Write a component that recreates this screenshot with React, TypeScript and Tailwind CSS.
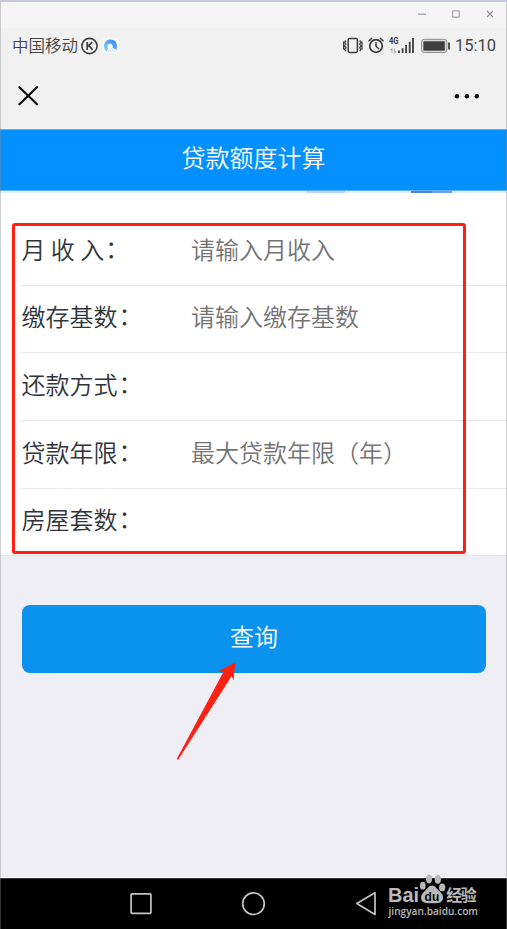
import React from 'react';

const rows = [
  { label: '月 收 入', hint: '请输入月收入', box: 'h-[67px]', line: 'border-[#e6e6e6]' },
  { label: '缴存基数', hint: '请输入缴存基数', box: 'h-[67px]', line: 'border-[#ebebeb]' },
  { label: '还款方式', hint: '', box: 'h-[68px]', line: 'border-[#e6e6e6]' },
  { label: '贷款年限', hint: '最大贷款年限（年）', box: 'h-[68px]', line: 'border-[#ebebeb]' },
  { label: '房屋套数', hint: '', box: 'h-[67px]', line: 'border-transparent' },
];

function WindowBar() {
  return (
    <div className="flex h-7 shrink-0 justify-end border-t-2 border-[#c6c8df] bg-[#f5f5f5]">
      <svg width="107" height="26" viewBox="400 2 107 26" fill="none" stroke="#a3a3a3">
        <path d="M418 14.2h8" strokeWidth="1.3" />
        <rect x="452.6" y="10.8" width="6.6" height="6.4" rx="0.6" strokeWidth="1.2" />
        <path d="M487 11l6 6M493 11l-6 6" stroke="#8c8c8c" strokeWidth="1.1" />
      </svg>
    </div>
  );
}

function StatusBar() {
  return (
    <div className="flex h-[35px] shrink-0 items-center pl-3 pr-[11px] text-[16.5px] text-[#454545]">
      <span className="font-[350] leading-none">中国移动</span>
      <svg className="ml-[2px]" width="42" height="24" viewBox="80 33.5 42 24" fill="none">
        <circle cx="89.5" cy="45.5" r="7.6" stroke="#3f3f3f" strokeWidth="1.6" />
        <path d="M87.2 41.6v7.8M92.3 41.6l-4.6 4.3M88.8 45l3.8 4.4" stroke="#3f3f3f" strokeWidth="1.7" />
        <rect x="102.5" y="37.5" width="16" height="15" rx="3" fill="#f8fafc" />
        <defs>
          <linearGradient id="ring" x1="104" y1="50" x2="116" y2="40" gradientUnits="userSpaceOnUse">
            <stop stopColor="#8ad2f8" />
            <stop offset="1" stopColor="#2f8df5" />
          </linearGradient>
        </defs>
        <path d="M110.5 39c3.8 0 6.5 2.8 6.4 6.4l-.3 4.1-4-2.2c.3-2.6-.6-4-2.4-4-2.6 0-3.4 2.3-2.2 4.4l-1 3.4c-2.1-1.1-3.3-3.2-3.1-5.8.2-3.6 3-6.3 6.6-6.3z" fill="url(#ring)" />
        <path d="M107.5 51.5c-.4-2 .8-3 2.3-2.8.7-1.4 2.6-1.5 3.5-.2 1.5-.1 2.8 1 2.9 3z" fill="#e2edf7" />
      </svg>
      <svg className="ml-auto" width="110" height="24" viewBox="341 33.5 110 24" fill="none">
        <g stroke="#3b3b3b" strokeWidth="1.5">
          <rect x="348.2" y="37.9" width="9.2" height="14" rx="1.4" />
          <path d="M346 40l-1.5 1.8 1.5 1.8-1.5 1.8 1.5 1.8-1.5 1.8 1.5 1.5M343.6 41v8M359.6 40l1.5 1.8-1.5 1.8 1.5 1.8-1.5 1.8 1.5 1.8-1.5 1.5M362 41v8" strokeWidth="1.2" />
          <circle cx="376" cy="45.5" r="6.3" strokeWidth="1.7" />
          <path d="M376 41.7v4l3 2.8M368.5 40.7l3.6-3.2M383.5 40.7l-3.6-3.2" />
        </g>
        <text x="389" y="43.8" fontSize="9" fontWeight="700" fill="#3b3b3b" className="font-['Roboto']" textLength="9.5" lengthAdjust="spacingAndGlyphs">4G</text>
        <path d="M392 52.5V48l-1.6 1.6M394.6 48v4.5l1.8-1.8" stroke="#b0b0b0" strokeWidth="1.1" />
        <path d="M398.9 50v2.5M402.6 47.8v4.7M406.1 44.6v7.9M409.7 41.2v11.3M413 37.6v14.9" stroke="#3b3b3b" strokeWidth="1.8" />
        <rect x="421.6" y="38.8" width="25.2" height="13.2" rx="2.6" stroke="#888888" strokeWidth="1" />
        <rect x="422.6" y="39.8" width="23.2" height="11.2" rx="1.5" fill="#d0d0d0" />
        <rect x="423.4" y="40.8" width="21.4" height="9.4" fill="#3f3f3f" />
        <path d="M449 42v7" stroke="#3f3f3f" strokeWidth="1.8" />
      </svg>
      <span className="ml-1 translate-y-px font-['Roboto',sans-serif] text-[16.5px] leading-none">15:10</span>
    </div>
  );
}

function Watermark() {
  return (
    <div className="absolute left-[384px] top-[872px] h-[54px] w-[100px]">
      <svg width="100" height="54" viewBox="384 872 100 54">
        <g fill="#b9b9bb">
          <ellipse cx="422.8" cy="885.7" rx="2.9" ry="3.9" />
          <ellipse cx="429" cy="879" rx="3" ry="4.4" />
          <ellipse cx="437.8" cy="879.4" rx="3.1" ry="4.4" />
          <ellipse cx="442.2" cy="887.4" rx="3.1" ry="3.9" />
          <path d="M432 885.4c3.2 0 4.6 3 7 5.4 2.6 2.4 4.5 4.5 4 7.7-.5 3.9-3.9 5-11 4.7-6.9.3-10.5-.8-10.9-4.7-.3-3.3 1.4-5.3 3.9-7.7 2.4-2.4 3.8-5.4 7-5.4z" />
          <text x="388" y="902.3" fontSize="21" fontWeight="700" textLength="31" lengthAdjust="spacingAndGlyphs" className="font-['Liberation_Sans',sans-serif]">Bai</text>
          <text x="446.3" y="901.3" fontSize="16" fontWeight="700" textLength="30.5" className="font-['Noto_Sans_CJK_SC',sans-serif]">经验</text>
          <text x="388.5" y="914.5" fontSize="10.5" fontWeight="600" textLength="89.5" lengthAdjust="spacingAndGlyphs" className="font-['Open_Sans',sans-serif]">jingyan.baidu.com</text>
        </g>
        <text x="424.6" y="900.8" fontSize="13" fontWeight="700" fill="#050505" textLength="14.6" lengthAdjust="spacingAndGlyphs" className="font-['Liberation_Sans',sans-serif]">du</text>
      </svg>
    </div>
  );
}

export default function App() {
  return (
    <div
      lang="zh-CN"
      className="relative flex h-[929px] w-[507px] flex-col overflow-hidden bg-[#f1f1f1] font-['Noto_Sans_CJK_SC',sans-serif]"
    >
      <WindowBar />
      <StatusBar />
      <header className="flex h-[66px] shrink-0 items-center justify-between pl-[18px] pr-[27px]">
        <svg width="20" height="20" viewBox="18 86 20 20" stroke="#080808" strokeWidth="2.1" strokeLinecap="round">
          <path d="M19.4 87.2l17.6 17.1M37 87.2l-17.6 17.1" />
        </svg>
        <svg width="26" height="6" viewBox="454 93 26 6" fill="#000000">
          <circle cx="457" cy="96.2" r="2.2" />
          <circle cx="466.9" cy="96.2" r="2.2" />
          <circle cx="476.8" cy="96.2" r="2.2" />
        </svg>
      </header>
      <h1 className="flex h-[62px] shrink-0 items-center justify-center border-y border-[#5aaff5] bg-[#0490ff] pb-[6px] text-2xl font-[350] text-white">
        贷款额度计算
      </h1>
      <div className="flex h-[2px] shrink-0 bg-[#e0efff]">
        <span className="ml-[307px] h-full w-[38px] bg-[#b5d5f8]" />
        <span className="ml-[66px] h-full w-[21px] bg-[#4f85d0]" />
        <span className="h-full w-5 bg-[#6e9ff0]" />
      </div>
      <main className="h-[362px] shrink-0 bg-white pl-[21px] pt-[26px]">
        {rows.map((row) => (
          <div key={row.label} className={`flex items-center border-b pb-[6px] text-2xl font-[350] ${row.box} ${row.line}`}>
            <span className="flex w-[170px] whitespace-pre pl-[0.5px] text-[#30343a]">
              {row.label}
              <span className="-translate-y-px translate-x-px">：</span>
            </span>
            <span className="whitespace-nowrap text-[#737373]">{row.hint}</span>
          </div>
        ))}
      </main>
      <section className="h-[323px] shrink-0 border-b border-t border-b-white border-t-[#e4e4e6] bg-[#efeef4] pl-[22px] pr-[21px] pt-[49px]">
        <button className="flex h-[68px] w-full items-center justify-center rounded-lg bg-[#0a93ee] pb-[6px] text-2xl font-[350] text-white">
          查询
        </button>
      </section>
      <nav className="h-[51px] shrink-0 border-t border-[#333333] bg-black">
        <svg width="507" height="50" viewBox="0 879 507 50" fill="none" stroke="#c4c4c4" strokeWidth="1.7" strokeLinejoin="round">
          <rect x="131.1" y="893.9" width="19.8" height="19.4" rx="0.8" />
          <circle cx="253.5" cy="903.7" r="10.8" />
          <path d="M375 892.8v21.6l-18.2-11z" />
        </svg>
      </nav>
      <div className="absolute left-[12px] top-[223px] h-[331px] w-[454px] rounded-[3px] border-[3px] border-[#ff2014]" />
      <svg className="absolute left-[170px] top-[655px]" width="75" height="110" viewBox="170 655 75 110">
        <path d="M235.2 662.5L218.2 671.3l5.1 1L177 758.6c-.1 1 .7 1.4 1.4.8L231.7 676l1.8 4.4z" fill="#ff2014" />
      </svg>
      <div className="absolute left-0 top-[2px] h-[927px] w-px bg-[#88888e]/40" />
      <div className="absolute right-0 top-[2px] h-[927px] w-px bg-[#88888e]/40" />
      <Watermark />
    </div>
  );
}
